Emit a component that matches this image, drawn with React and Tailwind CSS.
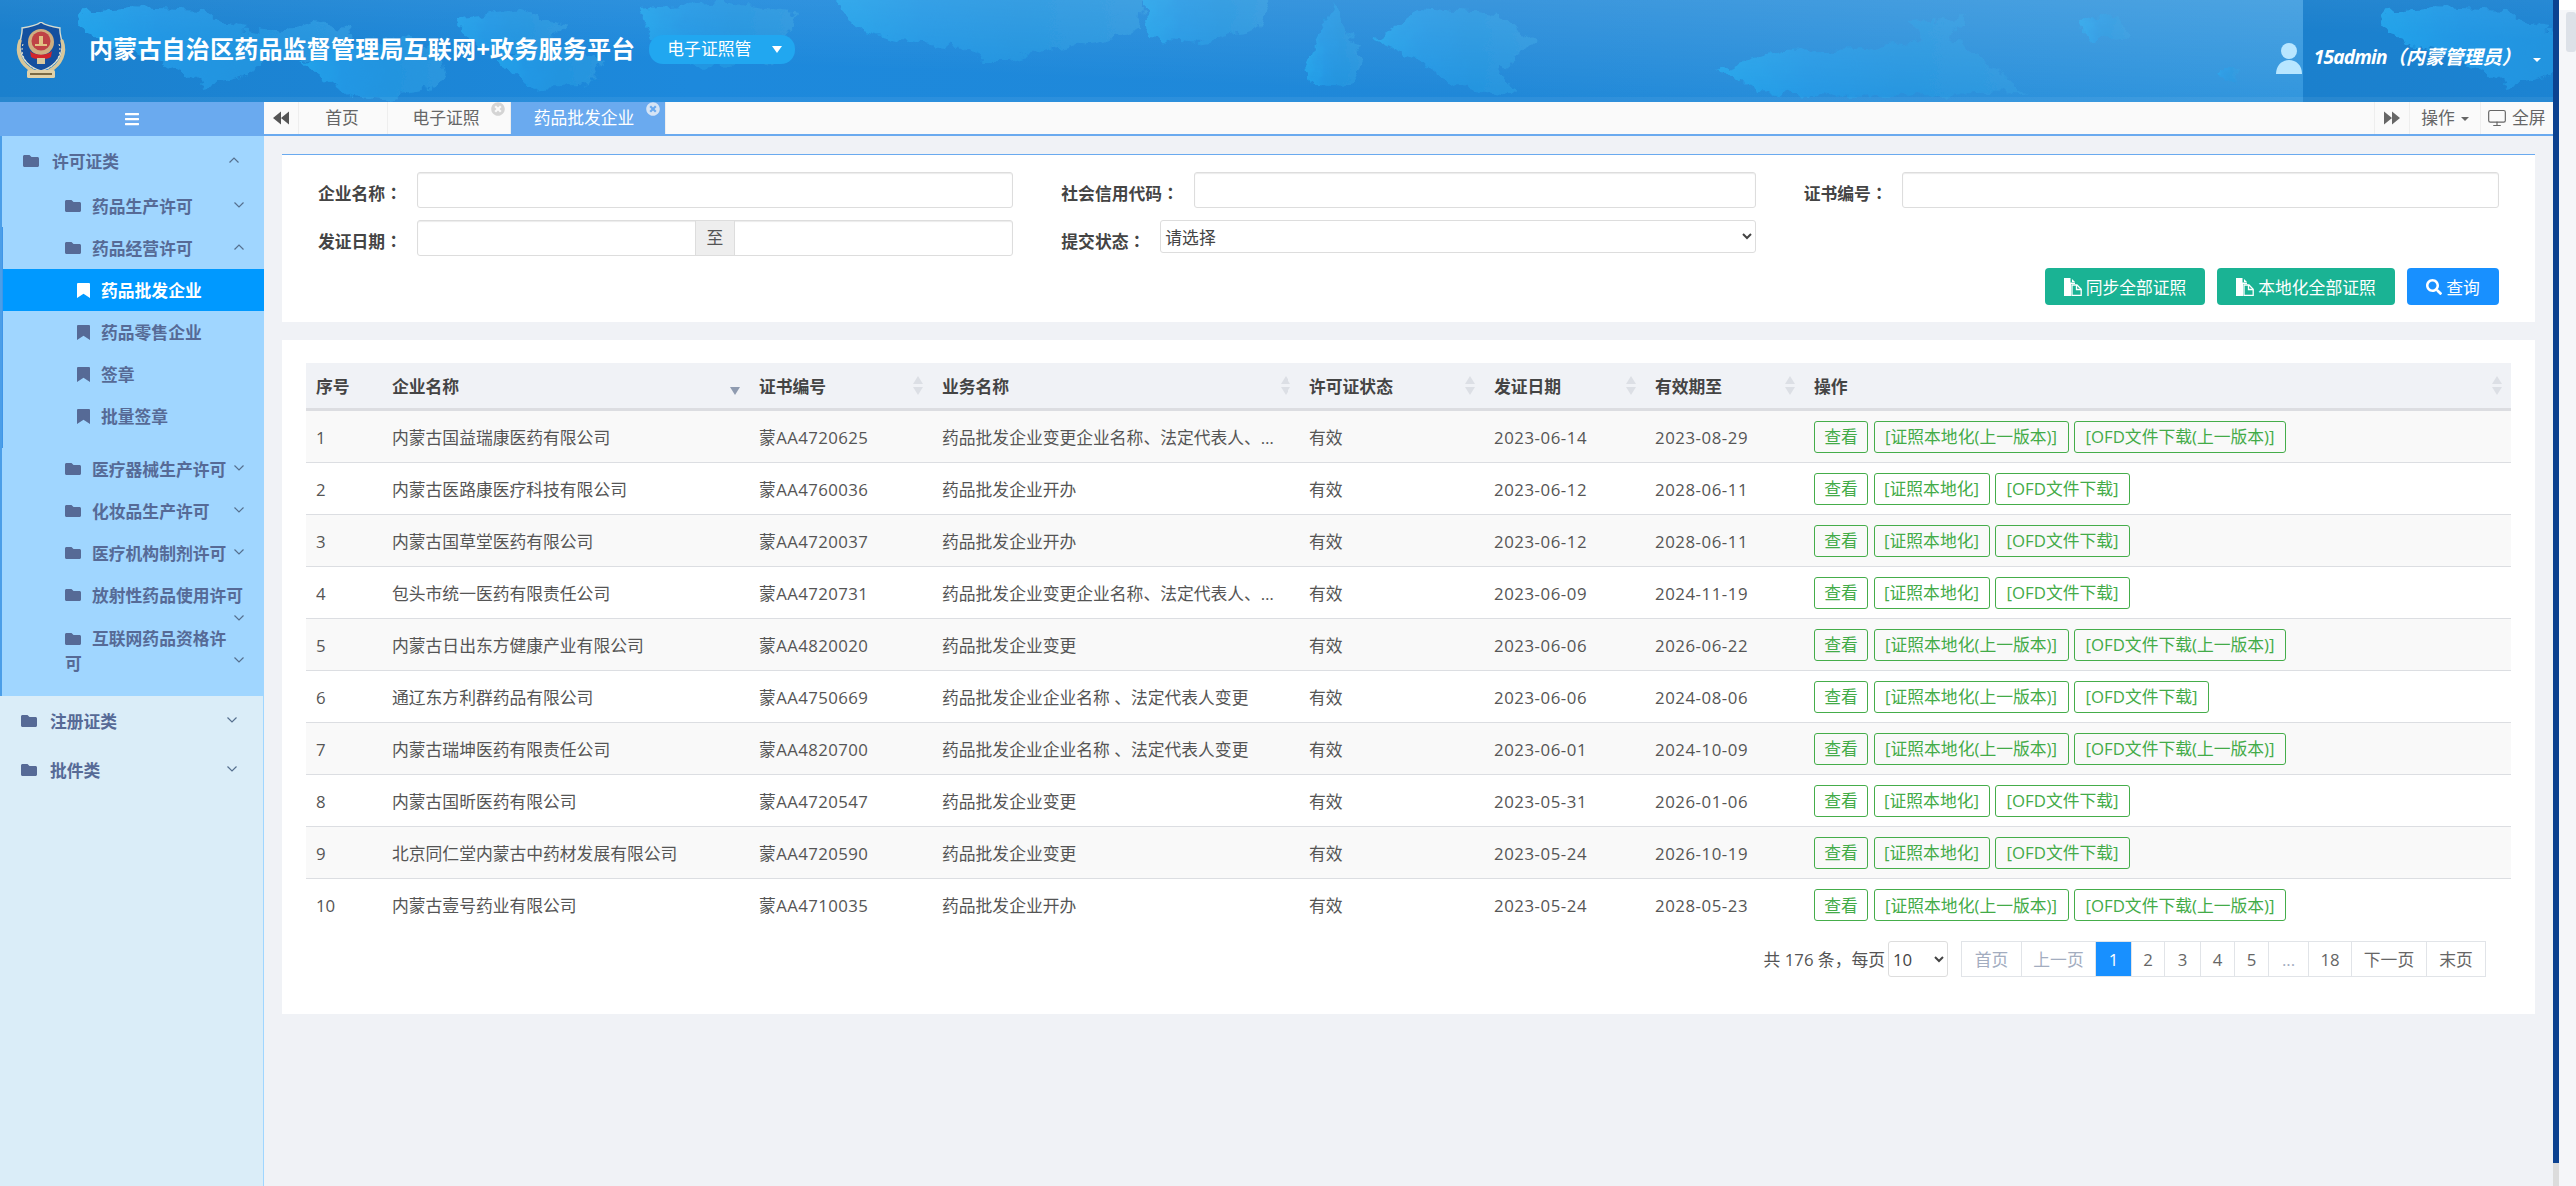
import React from "react";
import { FaFolder, FaBars, FaTimesCircle, FaSearch } from "react-icons/fa";
import { Monitor } from "lucide-react";

const rows = [
  ["内蒙古国益瑞康医药有限公司", "蒙AA4720625", "药品批发企业变更企业名称、法定代表人、…", "2023-06-14", "2023-08-29", 1, 1],
  ["内蒙古医路康医疗科技有限公司", "蒙AA4760036", "药品批发企业开办", "2023-06-12", "2028-06-11", 0, 0],
  ["内蒙古国草堂医药有限公司", "蒙AA4720037", "药品批发企业开办", "2023-06-12", "2028-06-11", 0, 0],
  ["包头市统一医药有限责任公司", "蒙AA4720731", "药品批发企业变更企业名称、法定代表人、…", "2023-06-09", "2024-11-19", 0, 0],
  ["内蒙古日出东方健康产业有限公司", "蒙AA4820020", "药品批发企业变更", "2023-06-06", "2026-06-22", 1, 1],
  ["通辽东方利群药品有限公司", "蒙AA4750669", "药品批发企业企业名称 、法定代表人变更", "2023-06-06", "2024-08-06", 1, 0],
  ["内蒙古瑞坤医药有限责任公司", "蒙AA4820700", "药品批发企业企业名称 、法定代表人变更", "2023-06-01", "2024-10-09", 1, 1],
  ["内蒙古国昕医药有限公司", "蒙AA4720547", "药品批发企业变更", "2023-05-31", "2026-01-06", 0, 0],
  ["北京同仁堂内蒙古中药材发展有限公司", "蒙AA4720590", "药品批发企业变更", "2023-05-24", "2026-10-19", 0, 0],
  ["内蒙古壹号药业有限公司", "蒙AA4710035", "药品批发企业开办", "2023-05-24", "2028-05-23", 1, 1],
];

function Chevron({ up, className = "" }) {
  return (
    <svg viewBox="0 0 10 6" className={`w-[10px] h-[6px] ${className}`} fill="none" stroke="#56708f" strokeWidth="1.2">
      <polyline points={up ? "0.5,5.5 5,1 9.5,5.5" : "0.5,0.5 5,5 9.5,0.5"} />
    </svg>
  );
}

function MapBg() {
  return (
    <svg width="2304" height="102" viewBox="0 0 2304 102" className="shrink-0 block">
      <defs>
        <linearGradient id="hb" x1="0" y1="0" x2="1" y2="0">
          <stop offset="0" stopColor="#1b80cd" />
          <stop offset="0.3" stopColor="#1d89dc" />
          <stop offset="0.65" stopColor="#2088d8" />
          <stop offset="1" stopColor="#2a92dc" />
        </linearGradient>
        <linearGradient id="hm" x1="0" y1="0" x2="1" y2="0">
          <stop offset="0" stopColor="#20a3ea" />
          <stop offset="0.3" stopColor="#2097e4" />
          <stop offset="0.6" stopColor="#2294df" />
          <stop offset="1" stopColor="#2b96de" />
        </linearGradient>
        <linearGradient id="ht" x1="0" y1="1" x2="1" y2="0">
          <stop offset="0.35" stopColor="#ffffff" stopOpacity="0" />
          <stop offset="1" stopColor="#ffffff" stopOpacity="0.16" />
        </linearGradient>
        <filter id="rough" x="-5%" y="-20%" width="110%" height="140%">
          <feTurbulence type="fractalNoise" baseFrequency="0.07" numOctaves="3" seed="4" />
          <feDisplacementMap in="SourceGraphic" scale="16" xChannelSelector="R" yChannelSelector="G" />
          <feGaussianBlur stdDeviation="0.7" />
        </filter>
      </defs>
      <rect width="2304" height="102" fill="url(#hb)" />
      <g fill="url(#hm)" filter="url(#rough)">
        <polygon points="76,13 130,7 205,10 220,24 280,33 316,20 352,30 340,52 300,60 268,58 240,78 205,86 175,70 150,55 110,45 85,35" />
        <polygon points="300,62 345,45 400,40 440,50 445,75 420,92 385,100 350,96 330,82" />
        <polygon points="455,20 520,8 565,26 540,55 480,52" />
        <polygon points="494,60 560,44 603,60 590,84 530,88" />
        <polygon points="640,10 720,2 800,14 770,60 700,66 650,40" />
        <polygon points="829,-6 1145,-6 1140,30 1100,42 1060,48 1010,60 985,60 960,48 900,40 860,30" />
        <polygon points="1144,-6 1270,-6 1255,30 1200,43 1150,38" />
        <polygon points="1307,60 1335,7 1365,60 1350,87 1315,85" />
        <polygon points="1375,40 1420,8 1500,14 1537,40 1500,70 1520,95 1460,87 1420,60" />
        <polygon points="1718,70 1780,50 1870,48 1925,40 1910,20 1967,17 1950,36 2000,70 2025,93 1850,97 1760,92" />
        <polygon points="2080,20 2120,15 2130,35 2090,40" />
        <polygon points="2220,70 2240,70 2235,82" />
      </g>
      <rect width="2304" height="102" fill="url(#ht)" />
      <rect y="97" width="2304" height="5" fill="#ffffff" opacity="0.06" />
    </svg>
  );
}

function Emblem() {
  return (
    <svg viewBox="0 0 52 57" className="w-[52px] h-[57px] shrink-0">
      <path d="M26 0 C31 4 38 5 45 6 C44 12 48 18 47 26 C46 38 36 46 26 49 C16 46 6 38 5 26 C4 18 8 12 7 6 C14 5 21 4 26 0Z" fill="#14509f" stroke="#d8dcd0" strokeWidth="1.4" />
      <g fill="none" stroke="#d8c79a" strokeWidth="3.4" strokeLinecap="round">
        <path d="M5 19 C1 30 5 42 18 49" />
        <path d="M47 19 C51 30 47 42 34 49" />
      </g>
      <g fill="none" stroke="#f2e8cb" strokeWidth="1" strokeDasharray="2 2">
        <path d="M8 22 C5 31 9 41 20 47" />
        <path d="M44 22 C47 31 43 41 32 47" />
      </g>
      <circle cx="26" cy="20" r="13" fill="#cfae80" />
      <circle cx="26" cy="19" r="9.5" fill="#bf4245" />
      <path d="M20 22 h12 v2 h-12z M24 14 h4 v8 h-4z" fill="#e2c183" />
      <path d="M15 29 C20 34 32 34 37 29 L36 35 C32 38 20 38 16 35Z" fill="#d2262b" />
      <rect x="22" y="36" width="8" height="6" fill="#d9c99e" />
      <rect x="12" y="48" width="28" height="8" rx="1.5" fill="#e0d1a8" />
      <rect x="15" y="51" width="22" height="2" fill="#7a6a45" />
    </svg>
  );
}

function Bookmark() {
  return (
    <svg viewBox="0 0 13 15" className="w-[13px] h-[15px] mr-[11px] shrink-0">
      <path d="M1 0h11a1 1 0 0 1 1 1v14l-6.5-4.2L0 15V1a1 1 0 0 1 1-1z" fill="currentColor" />
    </svg>
  );
}

function Colon() {
  return <span className="font-['Noto_Sans_CJK_TC',sans-serif]">：</span>;
}

function Top({ label, up }) {
  return (
    <div className="relative flex items-center h-[49px] pl-[21px] font-bold text-[#566a96]">
      <FaFolder className="w-[16px] h-[16px] mr-[13px]" />
      <span className="pt-[2px]">{label}</span>
      <Chevron up={up} className="absolute left-[227px] top-[21px]" />
    </div>
  );
}

function Sub({ label, up, noChev }) {
  return (
    <div className="relative flex items-center h-[42px] pl-[63px] font-bold text-[#566a96]">
      <FaFolder className="w-[16px] h-[16px] mr-[11px] shrink-0" />
      <span className="whitespace-nowrap pt-[2px]">{label}</span>
      {!noChev && <Chevron up={up} className="absolute left-[232px] top-[17px]" />}
    </div>
  );
}

function Leaf({ label, active }) {
  return (
    <div className={`flex items-center h-[42px] pl-[74px] font-bold ${active ? "bg-[#0099ff] text-white" : "text-[#566a96]"}`}>
      <Bookmark />
      <span className="pt-[2px]">{label}</span>
    </div>
  );
}

function Sidebar() {
  return (
    <aside className="w-[264px] shrink-0 flex flex-col bg-[#daedf8] h-full">
      <div className="h-[34px] bg-[#6aaaef] flex items-center justify-center text-white shrink-0">
        <FaBars className="w-[16px] h-[16px]" />
      </div>
      <div className="bg-[#a0d6ff] border-l-2 border-[#4b9ee8] h-[560px] shrink-0">
        <Top label="许可证类" up />
        <Sub label="药品生产许可" />
        <div className="border-l border-[#3f96e8] pb-[11px]">
          <div className="-ml-px"><Sub label="药品经营许可" up /></div>
          <Leaf label="药品批发企业" active />
          <Leaf label="药品零售企业" />
          <Leaf label="签章" />
          <Leaf label="批量签章" />
        </div>
        <Sub label="医疗器械生产许可" />
        <Sub label="化妆品生产许可" />
        <Sub label="医疗机构制剂许可" />
        <div className="relative">
          <Sub label="放射性药品使用许可" noChev />
          <Chevron className="absolute left-[232px] top-[41px]" />
        </div>
        <div className="relative pl-[63px] pr-[30px] pt-[10px] leading-[25px] font-bold text-[#566a96]">
          <FaFolder className="inline-block w-[16px] h-[16px] mr-[11px] align-[-2px]" />
          互联网药品资格许可
          <Chevron className="absolute left-[232px] top-[41px]" />
        </div>
      </div>
      <div className="flex-1 border-r border-[#a0d6ff]">
        <Top label="注册证类" />
        <Top label="批件类" />
      </div>
    </aside>
  );
}

function Tab({ label, w, closable, active, shift }) {
  return (
    <div className={`relative flex items-center justify-center h-[32px] border-r border-[#eee] ${w} ${active ? "bg-[#6aaaef] text-white" : "text-[#666]"}`}>
      <span className={shift}>{label}</span>
      {closable && (
        <FaTimesCircle className={`absolute right-[5px] top-0 w-[14px] h-[14px] ${active ? "text-[#d6e4f5]" : "text-[#d4d4d4]"}`} />
      )}
    </div>
  );
}

function DoubleArrow({ right }) {
  return (
    <svg viewBox="0 0 16 14" className={`w-[16px] h-[14px] ${right ? "" : "-scale-x-100"}`}>
      <path d="M0 0.5 L8 7 L0 13.5Z M8 0.5 L16 7 L8 13.5Z" fill="currentColor" />
    </svg>
  );
}

function TabBar() {
  return (
    <div className="h-[34px] shrink-0 bg-[#fafafa] border-b-2 border-[#6aaaef] flex">
      <div className="w-[35px] h-[32px] flex items-center justify-center border-r border-[#eee] text-[#555]">
        <DoubleArrow />
      </div>
      <Tab label="首页" w="w-[89px]" shift="-translate-x-[1px]" />
      <Tab label="电子证照" w="w-[123px]" closable shift="-translate-x-[3px]" />
      <Tab label="药品批发企业" w="w-[155px]" closable active shift="-translate-x-[4px]" />
      <div className="ml-auto flex h-[32px] text-[#666]">
        <div className="w-[36px] flex items-center justify-center border-l border-r border-[#eee]">
          <DoubleArrow right />
        </div>
        <div className="w-[71px] flex items-center justify-center gap-[6px] border-r border-[#eee]">
          <span>操作</span>
          <span className="w-0 h-0 mt-[2px] border-x-[4px] border-x-transparent border-t-[4px] border-t-[#666]" />
        </div>
        <div className="w-[72px] flex items-center pl-[6px] gap-[5px]">
          <Monitor className="w-[20px] h-[20px]" strokeWidth={1.4} />
          <span>全屏</span>
        </div>
      </div>
    </div>
  );
}

function Field({ label, lw, children }) {
  return (
    <div className="flex items-start h-[36px]">
      <label className={`font-bold text-[#444] pt-[8px] leading-[26px] whitespace-nowrap shrink-0 ${lw}`}>
        {label}
        <Colon />
      </label>
      {children}
    </div>
  );
}

const inputCls = "flex-1 min-w-0 h-[36px] border border-[#ddd] rounded-[3px] bg-white shadow-[inset_0_1px_1px_rgba(0,0,0,0.08)]";

function CopyIcon() {
  return (
    <svg viewBox="0 0 18 18" className="w-[18px] h-[18px] shrink-0">
      <path d="M0 0h6.5v4.5H11V6H7v12H0z" fill="#fff" />
      <path d="M8 1l3 3H8z" fill="#fff" />
      <path d="M8 7h5l4.2 4.2V17.3H8z" fill="none" stroke="#fff" strokeWidth="1.3" />
      <path d="M12.5 7v4.5H17" fill="none" stroke="#fff" strokeWidth="1.3" />
    </svg>
  );
}

function ActionBtn({ color, w, children }) {
  return (
    <button className={`h-[37px] rounded-[4px] text-white flex items-center justify-center gap-[4px] ${color} ${w}`}>{children}</button>
  );
}

function FilterCard() {
  return (
    <section className="bg-white border-t border-[#6aaaef] h-[168px] pt-[17px] pl-[36px] pr-[36px] shrink-0">
      <div className="grid grid-cols-3 gap-x-[48px] gap-y-[12px]">
        <Field label="企业名称" lw="w-[99px]"><input className={inputCls} /></Field>
        <Field label="社会信用代码" lw="w-[133px]"><input className={inputCls} /></Field>
        <Field label="证书编号" lw="w-[98px]"><input className={inputCls} /></Field>
        <Field label="发证日期" lw="w-[99px]">
          <div className="flex-1 flex h-[36px] border border-[#ddd] rounded-[3px] shadow-[inset_0_1px_1px_rgba(0,0,0,0.08)]">
            <input className="w-[277px] h-full bg-transparent" />
            <span className="w-[40px] h-full bg-[#eee] border-x border-[#ddd] flex items-center justify-center text-[#555]">至</span>
            <input className="flex-1 min-w-0 h-full bg-transparent" />
          </div>
        </Field>
        <Field label="提交状态" lw="w-[99px]">
          <select defaultValue="" className="flex-1 min-w-0 h-[33px] border border-[#ddd] rounded-[3px] bg-white text-[#444] pt-[2px]">
            <option value="">请选择</option>
          </select>
        </Field>
        <div />
      </div>
      <div className="flex justify-end gap-[12px] mt-[12px]">
        <ActionBtn color="bg-[#1ab394]" w="w-[160px]"><CopyIcon /><span className="pt-[2px]">同步全部证照</span></ActionBtn>
        <ActionBtn color="bg-[#1ab394]" w="w-[178px]"><CopyIcon /><span className="pt-[2px]">本地化全部证照</span></ActionBtn>
        <ActionBtn color="bg-[#1890ff]" w="w-[92px]"><FaSearch className="w-[16px] h-[16px]" /><span className="pt-[2px]">查询</span></ActionBtn>
      </div>
    </section>
  );
}

function Sort({ active }) {
  return (
    <svg viewBox="0 0 10 22" className="w-[10px] h-[22px] shrink-0">
      {!active && <polygon points="5,1 10,9 0,9" fill="#dcdfe5" />}
      <polygon points="0,12 10,12 5,20" fill={active ? "#8f9bb0" : "#dcdfe5"} />
    </svg>
  );
}

function Th({ label, sort, active }) {
  return (
    <th className="h-[48px] p-0 pl-[10px] pr-[9px] bg-[#f0f2f6] border-b-[3px] border-[#dcdde1] text-left font-bold text-[#444]">
      <div className="flex items-center justify-between">
        <span className="pt-[2px]">{label}</span>
        {sort && <Sort active={active} />}
      </div>
    </th>
  );
}

function Op({ w, children }) {
  return (
    <span className={`h-[32px] pt-[1px] border border-[#45ad4a] rounded-[3px] text-[#43ab48] flex items-center justify-center whitespace-nowrap shrink-0 ${w}`}>{children}</span>
  );
}

function DataTable() {
  return (
    <table className="w-[2206px] table-fixed border-separate border-spacing-0">
      <colgroup>
        <col className="w-[76px]" />
        <col className="w-[367px]" />
        <col className="w-[183px]" />
        <col className="w-[368px]" />
        <col className="w-[185px]" />
        <col className="w-[161px]" />
        <col className="w-[159px]" />
        <col className="w-[707px]" />
      </colgroup>
      <thead>
        <tr>
          <Th label="序号" />
          <Th label="企业名称" sort active />
          <Th label="证书编号" sort />
          <Th label="业务名称" sort />
          <Th label="许可证状态" sort />
          <Th label="发证日期" sort />
          <Th label="有效期至" sort />
          <Th label="操作" sort />
        </tr>
      </thead>
      <tbody className="text-[#555]">
        {rows.map((r, i) => {
          const td = `h-[52px] p-0 pl-[10px] ${i < 9 ? "border-b border-[#dcdee2]" : ""} ${i % 2 === 0 ? "bg-[#f9f9f9]" : "bg-white"}`;
          const t = "block pt-[2px]";
          return (
            <tr key={i}>
              <td className={td}><span className={t}>{i + 1}</span></td>
              <td className={td}><span className={t}>{r[0]}</span></td>
              <td className={`${td} tracking-[0.4px]`}><span className={t}>{r[1]}</span></td>
              <td className={`${td} whitespace-nowrap`}><span className={t}>{r[2]}</span></td>
              <td className={td}><span className={t}>有效</span></td>
              <td className={`${td} tracking-[0.55px]`}><span className={t}>{r[3]}</span></td>
              <td className={`${td} tracking-[0.55px]`}><span className={t}>{r[4]}</span></td>
              <td className={td}>
                <div className="flex gap-[5.5px]">
                  <Op w="w-[54px]">查看</Op>
                  {r[5] ? <Op w="w-[195px]">[证照本地化(上一版本)]</Op> : <Op w="w-[116px]">[证照本地化]</Op>}
                  {r[6] ? <Op w="w-[212px]">[OFD文件下载(上一版本)]</Op> : <Op w="w-[135px]">[OFD文件下载]</Op>}
                </div>
              </td>
            </tr>
          );
        })}
      </tbody>
    </table>
  );
}

function Pg({ w, children, cur, dis }) {
  return (
    <span className={`h-[36px] pt-[2px] flex items-center justify-center border-y border-r border-[#e1e4e8] ${w} ${cur ? "bg-[#1890ff] text-white border-[#1890ff]" : dis ? "text-[#a3adbf]" : "text-[#666]"}`}>{children}</span>
  );
}

function Pager() {
  return (
    <div className="flex justify-end items-center h-[36px] mt-[10px] pr-[25px]">
      <span className="text-[#555] mr-[3px] pt-[2px]">共 176 条，每页</span>
      <select defaultValue="10" className="w-[60px] h-[36px] border border-[#ddd] rounded-[3px] bg-white text-[#444] mr-[13px]">
        <option value="10">10</option>
      </select>
      <div className="flex border-l border-[#e1e4e8]">
        <Pg w="w-[60px]" dis>首页</Pg>
        <Pg w="w-[74px]" dis>上一页</Pg>
        <Pg w="w-[36px]" cur>1</Pg>
        <Pg w="w-[33px]">2</Pg>
        <Pg w="w-[36px]">3</Pg>
        <Pg w="w-[34px]">4</Pg>
        <Pg w="w-[34px]">5</Pg>
        <Pg w="w-[40px]" dis>...</Pg>
        <Pg w="w-[43px]">18</Pg>
        <Pg w="w-[75px]">下一页</Pg>
        <Pg w="w-[59px]">末页</Pg>
      </div>
    </div>
  );
}

export default function App() {
  return (
    <div className="w-[2577px] h-[1186px] overflow-hidden flex text-[16.8px] bg-[#f0f2f6] font-['Open_Sans','Noto_Sans_CJK_SC',sans-serif]">
      <div className="w-[2554px] shrink-0 flex flex-col">
        <header className="relative h-[102px] shrink-0 overflow-hidden text-white">
          <div className="absolute inset-0 flex">
            <MapBg />
            <MapBg />
          </div>
          <div className="relative h-full flex items-center pb-[4px]">
            <div className="ml-[15px] mt-[3px]"><Emblem /></div>
            <h1 className="ml-[22px] text-[24px] font-bold tracking-[0.2px] leading-none whitespace-nowrap">内蒙古自治区药品监督管理局互联网+政务服务平台</h1>
            <div className="ml-[14px] w-[146px] h-[29px] rounded-[14px] bg-[#21a7f0] flex items-center pl-[18px]">
              <span>电子证照管</span>
              <span className="ml-[21px] w-0 h-0 border-x-[5px] border-x-transparent border-t-[7px] border-t-white" />
            </div>
            <div className="ml-auto flex items-center pr-[12px] mt-[16px]">
              <svg viewBox="0 0 26 31" className="w-[26px] h-[31px] mr-[12px] mt-[3px]">
                <circle cx="13" cy="8" r="8" fill="#b8e6ff" />
                <path d="M0 31 C0 22 6 17 13 17 C20 17 26 22 26 31Z" fill="#b8e6ff" />
              </svg>
              <span className="text-[19.2px] font-bold italic whitespace-nowrap"><span className="tracking-[-0.8px]">15admin</span>（内蒙管理员）</span>
              <span className="ml-[12px] mt-[5px] w-0 h-0 border-x-[4px] border-x-transparent border-t-[4px] border-t-white" />
            </div>
          </div>
        </header>
        <div className="flex-1 min-h-0 flex">
          <Sidebar />
          <main className="flex-1 min-w-0 flex flex-col">
            <TabBar />
            <div className="flex flex-col gap-[18px] pt-[18px] pl-[18px] pr-[18px]">
              <FilterCard />
              <section className="bg-white h-[674px] pt-[23px] px-[24px]">
                <DataTable />
                <Pager />
              </section>
            </div>
          </main>
        </div>
      </div>
      <div className="w-[6px] shrink-0 flex flex-col bg-[#dcdcdc]">
        <div className="h-[1163px] bg-[#0c4291]" />
      </div>
      <div className="w-[17px] shrink-0 bg-[#f5f6f9] border-t-[10px] border-white relative">
        <div className="absolute left-[7px] top-[2px] w-[10px] h-[40px] rounded-[3px] bg-[#dde1e8]" />
      </div>
    </div>
  );
}
